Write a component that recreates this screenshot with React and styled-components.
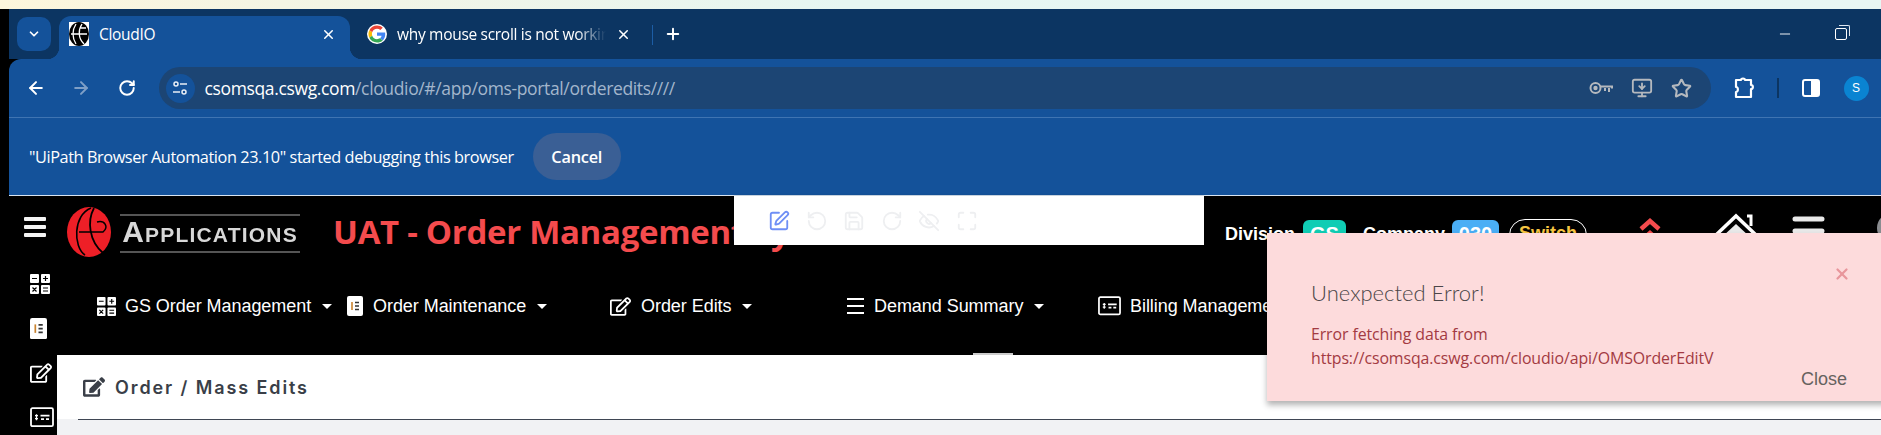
import styled, { createGlobalStyle } from 'styled-components'
import {
  ArrowLeft,
  ArrowRight,
  ChevronDown,
  EyeOff,
  Maximize,
  Minus,
  MonitorDown,
  Plus,
  RotateCcw,
  RotateCw,
  Save,
  SquarePen,
  Star,
  X,
} from 'lucide-react'
import { FaEdit, FaRegEdit } from 'react-icons/fa'

const GlobalStyle = createGlobalStyle`
  html, body {
    margin: 0;
    padding: 0;
    background: #000;
  }
  * {
    box-sizing: border-box;
  }
`

const Page = styled.div`
  position: relative;
  width: 1881px;
  height: 435px;
  overflow: hidden;
  background: #000;
  font-family: 'Liberation Sans', Arial, sans-serif;
`

const TopStrip = styled.div`
  height: 9px;
  background: linear-gradient(90deg, #fdf6dc 0%, #f4f5e4 15%, #e6f6f2 45%, #e8f6f3 100%);
`

const Window = styled.div`
  margin-left: 9px;
`

const TabBar = styled.div`
  height: 50px;
  background: #0c3562;
  display: flex;
  align-items: flex-end;
  padding-left: 8px;
  color: #fff;
  font-family: 'Open Sans', sans-serif;
`

const TabSearch = styled.div`
  width: 34px;
  height: 34px;
  margin-bottom: 8px;
  border-radius: 10px;
  background: #14529a;
  display: flex;
  align-items: center;
  justify-content: center;
`

const Tab = styled.div`
  position: relative;
  height: 43px;
  margin-left: 8px;
  width: ${({ $active }) => ($active ? '291px' : '287px')};
  padding: 0 14px 7px ${({ $active }) => ($active ? '10px' : '9px')};
  display: flex;
  align-items: center;
  gap: 10px;
  font-size: 15.5px;
  letter-spacing: -0.3px;
  border-radius: 12px 12px 0 0;
  background: ${({ $active }) => ($active ? '#14529a' : 'transparent')};
  & > svg {
    flex: none;
  }
  ${({ $active }) =>
    $active &&
    `
    &::before, &::after {
      content: '';
      position: absolute;
      bottom: 0;
      width: 12px;
      height: 12px;
    }
    &::before {
      left: -12px;
      background: radial-gradient(circle at 0 0, transparent 12px, #14529a 12.5px);
    }
    &::after {
      right: -12px;
      background: radial-gradient(circle at 100% 0, transparent 12px, #14529a 12.5px);
    }
  `}
`

const TabTitle = styled.span`
  flex: 1;
  min-width: 0;
  white-space: nowrap;
  -webkit-mask-image: ${({ $fade }) => ($fade ? 'linear-gradient(90deg, #000 86%, transparent 100%)' : 'none')};
`

const TabDivider = styled.div`
  width: 1px;
  height: 20px;
  margin: 0 11px 14px 7px;
  background: #1c5da5;
  align-self: flex-end;
`

const NewTab = styled.div`
  margin-bottom: 14px;
  height: 22px;
  display: flex;
  align-items: center;
`

const WindowControls = styled.div`
  margin-left: auto;
  margin-bottom: 17px;
  margin-right: 34px;
  display: flex;
  align-items: center;
  gap: 42px;
`

const RestoreIcon = styled.div`
  position: relative;
  width: 12px;
  height: 12px;
  border: 1.3px solid #fff;
  border-radius: 2px;
  &::after {
    content: '';
    position: absolute;
    top: -4px;
    right: -4px;
    width: 10px;
    height: 10px;
    border-top: 1px solid #dfe7f0;
    border-right: 1px solid #dfe7f0;
    border-radius: 0 2px 0 0;
  }
`

const Toolbar = styled.div`
  height: 59px;
  background: #14529a;
  border-top-left-radius: 12px;
  border-bottom: 1px solid #3f74b2;
  display: flex;
  align-items: center;
  padding-left: 4px;
`

const ToolButton = styled.div`
  width: 45.5px;
  display: flex;
  justify-content: center;
  color: ${({ $dim }) => ($dim ? '#7f9fc6' : '#fff')};
`

const AddressBar = styled.div`
  width: 1552px;
  height: 42px;
  margin-left: 9px;
  border-radius: 21px;
  background: #1c4574;
  display: flex;
  align-items: center;
  padding: 0 0 0 7px;
  font-family: 'Open Sans', sans-serif;
  font-size: 17.5px;
  letter-spacing: -0.36px;
  color: #fff;
`

const SiteInfo = styled.div`
  width: 29px;
  height: 29px;
  border-radius: 50%;
  background: #14529a;
  display: flex;
  align-items: center;
  justify-content: center;
  margin-right: 10px;
`

const UrlMuted = styled.span`
  color: #a3b6cc;
`

const AddressIcons = styled.div`
  margin-left: auto;
  margin-right: 19px;
  display: flex;
  align-items: center;
  gap: 18px;
  color: #b5b9be;
`

const ToolbarEnd = styled.div`
  display: flex;
  align-items: center;
  margin-left: 22px;
  color: #fff;
`

const ToolSeparator = styled.div`
  width: 2px;
  height: 20px;
  margin: 0 23px 0 22px;
  background: #0c3562;
`

const Avatar = styled.div`
  width: 25px;
  height: 25px;
  margin-left: 24px;
  border-radius: 50%;
  background: #0a84d2;
  color: #fff;
  font-size: 12px;
  display: flex;
  align-items: center;
  justify-content: center;
`

const InfoBar = styled.div`
  height: 78px;
  background: #14529a;
  border-bottom: 1px solid #d8e4f0;
  display: flex;
  align-items: center;
  padding-left: 20px;
  color: #fff;
  font-family: 'Open Sans', sans-serif;
  font-size: 16.3px;
  letter-spacing: -0.42px;
`

const CancelButton = styled.div`
  width: 88px;
  height: 47px;
  margin-left: 19px;
  border-radius: 24px;
  background: #3a5f95;
  display: flex;
  align-items: center;
  justify-content: center;
  font-weight: 600;
  letter-spacing: -0.2px;
`

const Header = styled.div`
  height: 65px;
  display: flex;
  align-items: flex-start;
  padding: 11px 0 0 15px;
`

const Burger = styled.div`
  width: 22px;
  height: 20px;
  margin-top: 10px;
  display: flex;
  flex-direction: column;
  justify-content: space-between;
  & > i {
    display: block;
    height: 4px;
    background: #f4f4f4;
    border-radius: 1px;
  }
`

const LogoWrap = styled.div`
  display: flex;
  align-items: flex-start;
  margin-left: 21px;
  gap: 9px;
  flex: none;
`

const LogoText = styled.div`
  width: 180px;
  height: 39px;
  margin-top: 7px;
  border-top: 2px solid #555;
  border-bottom: 2px solid #555;
  color: #d8d8d8;
  font-weight: 700;
  font-variant: small-caps;
  font-size: 30px;
  line-height: 32px;
  letter-spacing: 1.2px;
  white-space: nowrap;
  text-align: center;
  overflow: hidden;
  filter: blur(0.4px);
`

const Title = styled.div`
  margin-left: 33px;
  margin-top: 3px;
  color: #f44b4d;
  font-family: 'Open Sans', sans-serif;
  font-weight: 700;
  font-size: 33px;
  letter-spacing: -0.3px;
  line-height: 44px;
  white-space: nowrap;
  flex: none;
`

const HeaderRight = styled.div`
  flex: none;
  width: 656px;
  margin: 13px 0 0 auto;
  display: flex;
  align-items: flex-start;
  color: #fff;
  font-family: 'Liberation Sans', Arial, sans-serif;
  font-weight: 700;
  font-size: 18px;
  & > * {
    flex: none;
  }
`

const Label = styled.span`
  line-height: 28px;
  margin-right: ${({ $gap }) => $gap}px;
`

const Badge = styled.div`
  width: ${({ $w }) => $w}px;
  height: 32px;
  border-radius: 6px;
  background: ${({ $bg }) => $bg};
  font-size: 20px;
  line-height: 28px;
  text-align: center;
  margin-right: ${({ $gap }) => $gap}px;
`

const SwitchPill = styled.div`
  width: 78px;
  height: 32px;
  margin: -1px 0 0 10px;
  border: 1px solid #fff;
  border-radius: 16px;
  color: #f5c542;
  line-height: 27px;
  text-align: center;
`

const HeaderIcons = styled.div`
  display: flex;
  align-items: flex-start;
  margin-left: 52px;
  & > * {
    flex: none;
  }
`

const ChevronSlot = styled.div`
  margin: -2px 53px 0 0;
`

const HomeSlot = styled.div`
  margin: -7px 34px 0 0;
`

const MenuSlot = styled.div`
  margin: -5px 49px 0 0;
`

const UserDot = styled.div`
  width: 30px;
  height: 30px;
  margin-top: -7px;
  border-radius: 50%;
  background: #8a8c90;
`

const Body = styled.div`
  display: flex;
`

const Rail = styled.div`
  width: 48px;
  padding: 11px 0 0 21px;
  display: flex;
  flex-direction: column;
  gap: 20.5px;
  color: #fff;
  flex: none;
`

const RailSlot = styled.div`
  height: 24px;
  display: flex;
  align-items: center;
`

const Main = styled.div`
  flex: 1;
  display: flex;
  flex-direction: column;
`

const NavRow = styled.div`
  position: relative;
  height: 94px;
  padding: 33px 0 0 40px;
  display: flex;
  color: #fff;
  font-size: 18px;
  letter-spacing: -0.05px;
`

const NavItem = styled.div`
  width: ${({ $w }) => $w}px;
  display: flex;
  align-items: center;
  height: 24px;
  white-space: nowrap;
  flex: none;
`

const NavIcon = styled.span`
  width: ${({ $w }) => $w}px;
  display: flex;
  align-items: center;
  flex: none;
`

const Caret = styled.span`
  width: 0;
  height: 0;
  margin-left: 11px;
  border-left: 5px solid transparent;
  border-right: 5px solid transparent;
  border-top: 5px solid #fff;
`

const Handle = styled.div`
  position: absolute;
  left: 916px;
  bottom: 0;
  width: 40px;
  height: 2px;
  background: #ccc;
`

const Content = styled.div`
  background: #f1f2f4;
  height: 80px;
`

const PageHead = styled.div`
  height: 64px;
  background: #fff;
  padding-left: 26px;
  display: flex;
  align-items: center;
  gap: 10px;
  color: #3a3f48;
  font-family: Inter, sans-serif;
  font-weight: 600;
  font-size: 18px;
  letter-spacing: 1.9px;
`

const HeadRule = styled.div`
  height: 1px;
  margin-left: 21px;
  background: #3f4654;
`

const EditTools = styled.div`
  position: absolute;
  left: 734px;
  top: 196px;
  width: 470px;
  height: 49px;
  background: #fff;
  box-shadow: 0 0 3px rgba(0, 0, 0, 0.2);
  display: flex;
  align-items: center;
  gap: 15.5px;
  padding: 0 0 0 34px;
  color: #eeeff1;
`

const Toast = styled.div`
  position: absolute;
  left: 1267px;
  top: 233px;
  width: 640px;
  height: 168px;
  background: #fddbdc;
  box-shadow: 0 4px 6px rgba(0, 0, 0, 0.3);
  padding: 45px 0 0 44px;
  color: #a33a42;
  font-family: 'Open Sans', sans-serif;
`

const ToastTitle = styled.div`
  color: #4b4648;
  font-family: Lato, sans-serif;
  font-size: 22px;
  font-weight: 300;
  line-height: 30px;
  margin-bottom: 15px;
`

const ToastLine = styled.div`
  font-size: 15.9px;
  line-height: 23.5px;
  letter-spacing: -0.1px;
`

const ToastX = styled.div`
  position: absolute;
  left: 566px;
  top: 32px;
  color: #e8969c;
`

const ToastClose = styled.div`
  position: absolute;
  left: 534px;
  top: 136px;
  color: #66625f;
  font-family: 'Liberation Sans', sans-serif;
  font-size: 18px;
`

function GoogleIcon() {
  return (
    <svg width="20" height="20" viewBox="-4 -4 56 56">
      <circle cx="24" cy="24" r="28" fill="#fff" />
      <path fill="#EA4335" d="M24 9.5c3.5 0 6.7 1.2 9.2 3.6l6.9-6.9C35.9 2.4 30.5 0 24 0 14.6 0 6.5 5.4 2.6 13.2l8 6.2C12.5 13.7 17.800 9.500 24 9.500z" />
      <path fill="#4285F4" d="M47 24.500c0-1.600-.1-3.100-.4-4.500H24v9h13c-.6 3-2.300 5.500-4.800 7.200l7.700 6C44.400 38 47 31.800 47 24.500z" />
      <path fill="#FBBC05" d="M10.600 28.600c-.5-1.400-.8-3-.8-4.600s.3-3.200.8-4.600l-8-6.200C1 16.500 0 20.100 0 24s1 7.500 2.600 10.800l8-6.200z" />
      <path fill="#34A853" d="M24 48c6.500 0 11.900-2.100 15.900-5.800l-7.700-6c-2.200 1.500-5 2.300-8.200 2.300-6.200 0-11.500-4.200-13.400-9.900l-8 6.200C6.500 42.600 14.600 48 24 48z" />
    </svg>
  )
}

function CloudFavicon() {
  return (
    <svg width="20" height="24" viewBox="0 0 20 24">
      <rect width="20" height="24" fill="#fff" />
      <ellipse cx="10" cy="12" rx="10" ry="12" fill="#000" />
      <path d="M7 2 C3 8 3 16 7 22 M13 2 C9 8 9 16 15 22 M2 12 H18 M11 6 H17" stroke="#fff" strokeWidth="1.300" fill="none" />
    </svg>
  )
}

function SiteInfoIcon() {
  return (
    <svg width="16" height="16" viewBox="0 0 16 16" fill="none" stroke="#e8eef6" strokeWidth="1.5">
      <circle cx="4" cy="4" r="2" />
      <path d="M8 4h7M1 12h7" />
      <circle cx="12" cy="12" r="2" />
    </svg>
  )
}

function KeyIcon() {
  return (
    <svg width="24" height="14" viewBox="0 0 24 14" fill="none" stroke="#b5b9be" strokeWidth="2">
      <circle cx="6.500" cy="7" r="5" />
      <circle cx="6.500" cy="7" r="1.200" fill="#b5b9be" />
      <path d="M11.500 5.500H23V7.500M20 7v4M16 7v3" />
    </svg>
  )
}

function PuzzleIcon() {
  return (
    <svg width="22" height="22" viewBox="0 0 22 22" fill="none" stroke="#fff" strokeWidth="2.200" strokeLinejoin="round">
      <path d="M3 3h5c0-2 4-2 4 0h6v5c2.500 0 2.500 4 0 4v8H3v-5c2.500 0 2.500-5 0-5z" />
    </svg>
  )
}

function PanelIcon() {
  return (
    <svg width="18" height="18" viewBox="0 0 18 18">
      <rect x="1" y="1" width="16" height="16" rx="2" fill="#14529a" stroke="#fff" strokeWidth="2" />
      <rect x="9" y="1" width="8" height="16" rx="1" fill="#fff" />
    </svg>
  )
}

function CalcIcon({ size }) {
  return (
    <svg width={size} height={size} viewBox="0 0 20 20" fill="#fff">
      <rect x="0" y="0" width="9" height="9" rx="1" />
      <rect x="11" y="0" width="9" height="9" rx="1" />
      <rect x="0" y="11" width="9" height="9" rx="1" />
      <rect x="11" y="11" width="9" height="9" rx="1" />
      <path d="M2 4.500h5M13 4.500h5M15.500 2v5M2.500 13.500l4 4M6.500 13.500l-4 4M13 14h5M13 17h5" stroke="#000" strokeWidth="1.200" />
    </svg>
  )
}

function ElementorIcon({ size }) {
  return (
    <svg width={size} height={size * 1.25} viewBox="0 0 16 20">
      <rect width="16" height="20" rx="2" fill="#fff" />
      <path d="M5 6v8" stroke="#c9822e" strokeWidth="1.600" />
      <path d="M8 6.500h4M8 10h4M8 13.500h4" stroke="#333" strokeWidth="1.500" />
    </svg>
  )
}

function BillIcon({ size }) {
  return (
    <svg width={size} height={size * 0.85} viewBox="0 0 24 20" fill="none">
      <rect x="1" y="1" width="22" height="18" rx="1.500" stroke="#fff" strokeWidth="1.800" />
      <path d="M6.500 7v6M5 8.500h3M5 11.500h3" stroke="#fff" strokeWidth="1.300" />
      <path d="M10.500 8.500h9M11 12h3M16 12h3" stroke="#fff" strokeWidth="1.800" />
    </svg>
  )
}

function LinesIcon() {
  return (
    <svg width="17" height="18" viewBox="0 0 17 18" stroke="#fff" strokeWidth="2.200">
      <path d="M0 2h17M0 9h17M0 16h17" />
    </svg>
  )
}

function CsLogo() {
  return (
    <svg width="44" height="50" viewBox="0 0 44 50">
      <ellipse cx="22" cy="25" rx="22" ry="25" fill="#ee1f27" />
      <path d="M24 1 C6 8 6 40 18 48" stroke="#000" strokeWidth="1.600" fill="none" />
      <path d="M27 1 C20 14 22 34 36 46" stroke="#000" strokeWidth="1.800" fill="none" />
      <path d="M12 25 H36 C42 20 38 13 30 15" stroke="#000" strokeWidth="1.500" fill="none" />
    </svg>
  )
}

function HomeIcon() {
  return (
    <svg width="44" height="44" viewBox="0 0 44 44" fill="none">
      <path d="M2 22 L22 3 L42 22" stroke="#fff" strokeWidth="3.500" />
      <path d="M33 3h4v10" stroke="#fff" strokeWidth="3" />
      <path d="M8 24 L22 11 L36 24 V44 H8z" fill="#e9e9e9" />
    </svg>
  )
}

function ChevronsUp() {
  return (
    <svg width="22" height="26" viewBox="0 0 22 26" fill="none" stroke="#f44b4d" strokeWidth="4.500">
      <path d="M2 11 L11 3 L20 11M2 23 L11 15 L20 23" />
    </svg>
  )
}

function HeaderMenu() {
  return (
    <svg width="36" height="38" viewBox="0 0 36 38" stroke="#e9e9e9" strokeWidth="5" strokeLinecap="round">
      <path d="M3 4h27M3 16h27M3 28h27" />
    </svg>
  )
}

function App() {
  return (
    <Page>
      <GlobalStyle />
      <TopStrip />
      <Window>
        <TabBar>
          <TabSearch>
            <ChevronDown size={14} strokeWidth={3} color="#fff" />
          </TabSearch>
          <Tab $active>
            <CloudFavicon />
            <TabTitle>CloudIO</TabTitle>
            <X size={15} strokeWidth={2.4} />
          </Tab>
          <Tab>
            <GoogleIcon />
            <TabTitle $fade>why mouse scroll is not working</TabTitle>
            <X size={15} strokeWidth={2.4} />
          </Tab>
          <TabDivider />
          <NewTab>
            <Plus size={18} strokeWidth={2.6} />
          </NewTab>
          <WindowControls>
            <Minus size={16} strokeWidth={1.4} />
            <RestoreIcon />
          </WindowControls>
        </TabBar>
        <Toolbar>
          <ToolButton>
            <ArrowLeft size={20} strokeWidth={2.4} />
          </ToolButton>
          <ToolButton $dim>
            <ArrowRight size={20} strokeWidth={2.4} />
          </ToolButton>
          <ToolButton>
            <RotateCw size={18} strokeWidth={2.6} />
          </ToolButton>
          <AddressBar>
            <SiteInfo>
              <SiteInfoIcon />
            </SiteInfo>
            <span>
              csomsqa.cswg.com<UrlMuted>/cloudio/#/app/oms-portal/orderedits////</UrlMuted>
            </span>
            <AddressIcons>
              <KeyIcon />
              <MonitorDown size={22} strokeWidth={2} />
              <Star size={21} strokeWidth={2.4} />
            </AddressIcons>
          </AddressBar>
          <ToolbarEnd>
            <PuzzleIcon />
            <ToolSeparator />
            <PanelIcon />
            <Avatar>S</Avatar>
          </ToolbarEnd>
        </Toolbar>
        <InfoBar>
          "UiPath Browser Automation 23.10" started debugging this browser
          <CancelButton>Cancel</CancelButton>
        </InfoBar>
        <Header>
          <Burger>
            <i />
            <i />
            <i />
          </Burger>
          <LogoWrap>
            <CsLogo />
            <LogoText>Applications</LogoText>
          </LogoWrap>
          <Title>UAT - Order Management System</Title>
          <HeaderRight>
            <Label $gap={8}>Division</Label>
            <Badge $w={43} $bg="#10cdb4" $gap={17}>GS</Badge>
            <Label $gap={7}>Company</Label>
            <Badge $w={47} $bg="#4aaef5" $gap={0}>030</Badge>
            <SwitchPill>Switch</SwitchPill>
            <HeaderIcons>
              <ChevronSlot>
                <ChevronsUp />
              </ChevronSlot>
              <HomeSlot>
                <HomeIcon />
              </HomeSlot>
              <MenuSlot>
                <HeaderMenu />
              </MenuSlot>
              <UserDot />
            </HeaderIcons>
          </HeaderRight>
        </Header>
        <Body>
          <Rail>
            <RailSlot>
              <CalcIcon size={20} />
            </RailSlot>
            <RailSlot>
              <ElementorIcon size={17} />
            </RailSlot>
            <RailSlot>
              <FaRegEdit size={22} />
            </RailSlot>
            <RailSlot>
              <BillIcon size={24} />
            </RailSlot>
          </Rail>
          <Main>
            <NavRow>
              <NavItem $w={250}>
                <NavIcon $w={28}>
                  <CalcIcon size={19} />
                </NavIcon>
                GS Order Management
                <Caret />
              </NavItem>
              <NavItem $w={263}>
                <NavIcon $w={26}>
                  <ElementorIcon size={16} />
                </NavIcon>
                Order Maintenance
                <Caret />
              </NavItem>
              <NavItem $w={237}>
                <NavIcon $w={31}>
                  <FaRegEdit size={21} />
                </NavIcon>
                Order Edits
                <Caret />
              </NavItem>
              <NavItem $w={251}>
                <NavIcon $w={27}>
                  <LinesIcon />
                </NavIcon>
                Demand Summary
                <Caret />
              </NavItem>
              <NavItem $w={300}>
                <NavIcon $w={32}>
                  <BillIcon size={23} />
                </NavIcon>
                Billing Management
              </NavItem>
              <Handle />
            </NavRow>
            <Content>
              <PageHead>
                <FaEdit size={22} />
                Order / Mass Edits
              </PageHead>
              <HeadRule />
            </Content>
          </Main>
        </Body>
      </Window>
      <EditTools>
        <SquarePen size={22} color="#6f8ff5" />
        <RotateCcw size={22} />
        <Save size={22} />
        <RotateCw size={22} />
        <EyeOff size={22} />
        <Maximize size={22} />
      </EditTools>
      <Toast>
        <ToastTitle>Unexpected Error!</ToastTitle>
        <ToastLine>Error fetching data from</ToastLine>
        <ToastLine>https://csomsqa.cswg.com/cloudio/api/OMSOrderEditV</ToastLine>
        <ToastX>
          <X size={18} strokeWidth={3} />
        </ToastX>
        <ToastClose>Close</ToastClose>
      </Toast>
    </Page>
  )
}

export default App
